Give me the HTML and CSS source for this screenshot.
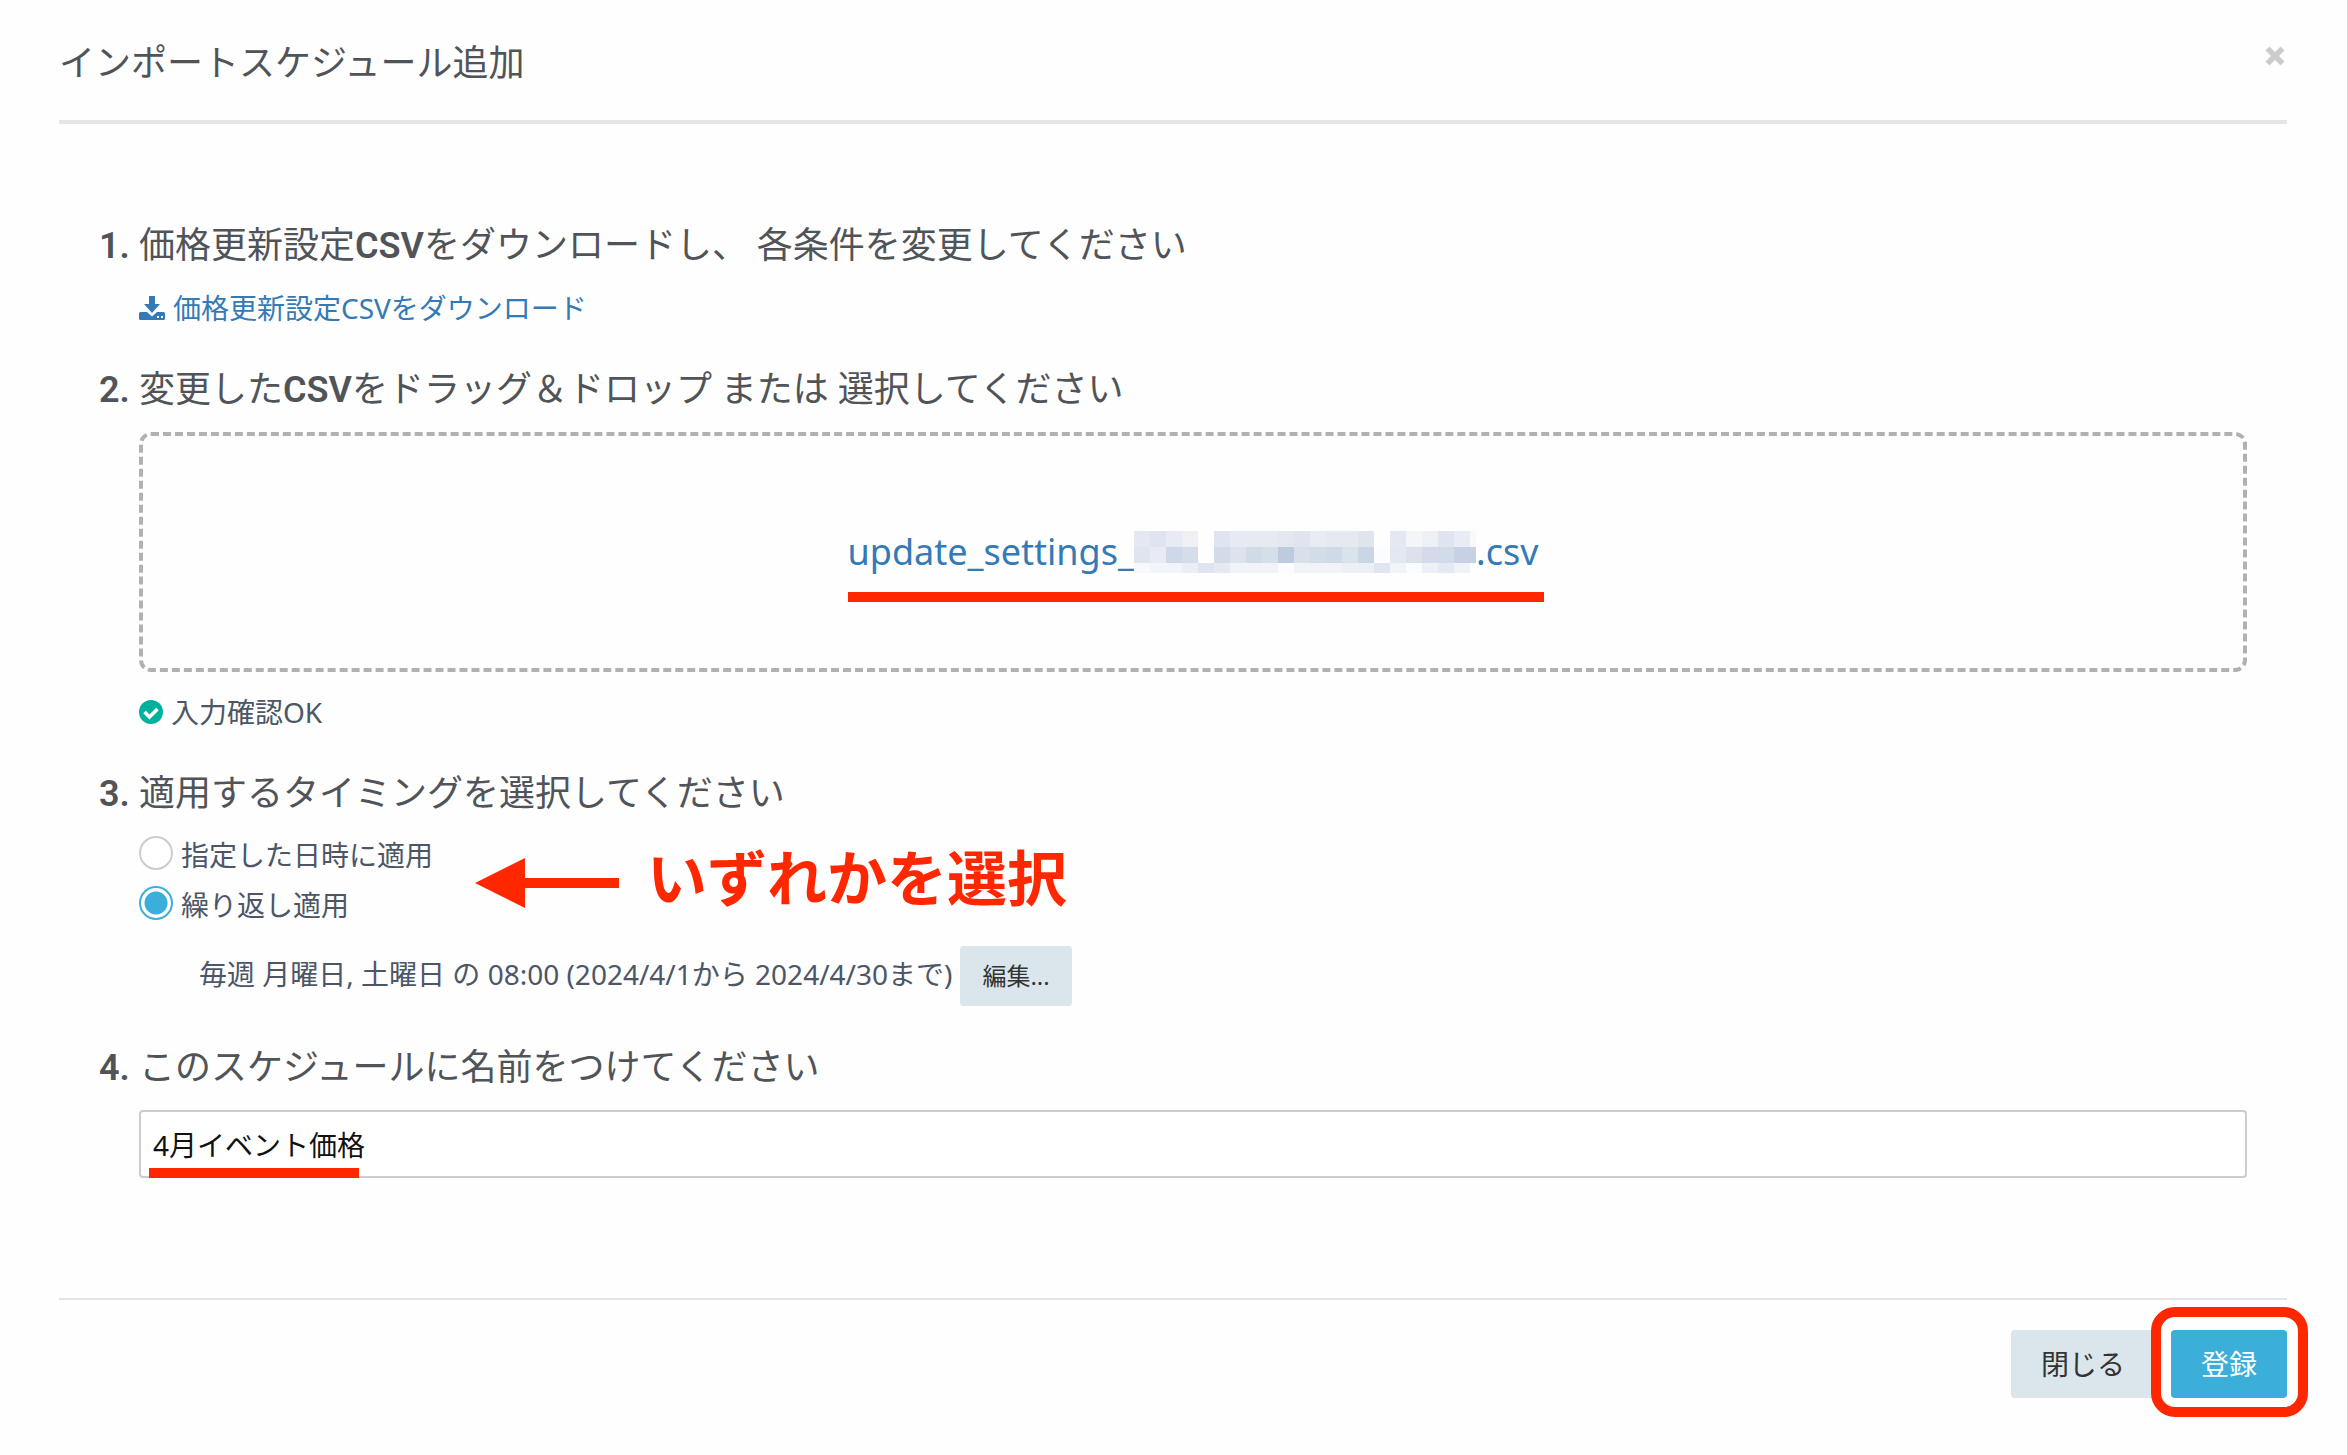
FILE: index.html
```html
<!DOCTYPE html>
<html lang="ja">
<head>
<meta charset="utf-8">
<title>インポートスケジュール追加</title>
<link rel="stylesheet" href="styles.css">
</head>
<body>
<main class="dialog">
  <header class="dialog-header">
    <h1 class="dialog-title">インポートスケジュール追加</h1>
    <button class="dismiss" type="button" aria-label="閉じる">
      <svg width="20" height="20" viewBox="0 0 20 20"><path d="M2.500 2.500L17.500 17.500M17.500 2.500L2.500 17.500" stroke="#ccc" stroke-width="5.600" fill="none"/></svg>
    </button>
  </header>

  <form class="steps">
    <section class="step">
      <h2 class="step-title"><b class="num">1.</b><span>価格更新設定<b>CSV</b>をダウンロードし、 各条件を変更してください</span></h2>
      <div class="step-body">
        <a class="download" href="#">
          <svg class="icon" width="26" height="24" viewBox="0 0 26 24"><path fill="currentColor" d="M10 0h6v8h5L13 17 5 8h5zM1.500 16H8l5 4.500L18 16h6.500Q26 16 26 17.500v5Q26 24 24.500 24h-23Q0 24 0 22.500v-5Q0 16 1.500 16z"/><path fill="#fff" d="M18 20h2v2h-2zM22 20h2v2h-2z"/></svg>
          <span>価格更新設定CSVをダウンロード</span>
        </a>
      </div>
    </section>

    <section class="step">
      <h2 class="step-title"><b class="num">2.</b><span>変更した<b>CSV</b>をドラッグ＆ドロップ または 選択してください</span></h2>
      <div class="step-body">
        <div class="dropzone">
          <a class="file" href="#"><span>update_settings_</span><svg class="mosaic" width="342" height="42" viewBox="0 0 342 42" shape-rendering="crispEdges" role="img" aria-label="非表示">
            <g>
              <path fill="#e4e8f1" d="M0 0h16v16H0z"/><path fill="#dfe4f0" d="M16 0h16v16H16z"/><path fill="#e8ebf3" d="M32 0h16v16H32z"/><path fill="#eef0f5" d="M48 0h16v16H48z"/>
              <path fill="#dee4f0" d="M80 0h16v16H80z"/><path fill="#e6eaf2" d="M96 0h48v16H96z"/><path fill="#e3e8ee" d="M144 0h16v16h-16z"/><path fill="#dfe5ee" d="M160 0h16v16h-16z"/><path fill="#e8ecf5" d="M176 0h16v16h-16z"/><path fill="#e5e9f1" d="M192 0h32v16h-32z"/><path fill="#dfe5ec" d="M224 0h16v16h-16z"/>
              <path fill="#e3e8f2" d="M256 0h16v16h-16z"/><path fill="#f3f5f9" d="M272 0h16v16h-16z"/><path fill="#edf0f5" d="M288 0h16v16h-16z"/><path fill="#dfe4f0" d="M304 0h16v16h-16z"/><path fill="#e8ecf4" d="M320 0h16v16h-16z"/><path fill="#f8f9fb" d="M336 0h6v16h-6z"/>
            </g>
            <g>
              <path fill="#dfe5ef" d="M0 16h16v16H0z"/><path fill="#e8ebf3" d="M16 16h16v16H16z"/><path fill="#ced8e8" d="M32 16h16v16H32z"/><path fill="#d5dcea" d="M48 16h16v16H48z"/>
              <path fill="#d3dae8" d="M80 16h16v16H80z"/><path fill="#dde3ec" d="M96 16h16v16H96z"/><path fill="#d0dbe7" d="M112 16h16v16h-16z"/><path fill="#d6deea" d="M128 16h16v16h-16z"/><path fill="#bccbe0" d="M144 16h16v16h-16z"/><path fill="#d9dfeb" d="M160 16h16v16h-16z"/><path fill="#d4dce9" d="M176 16h16v16h-16z"/><path fill="#cfd9e8" d="M192 16h16v16h-16z"/><path fill="#dae2eb" d="M208 16h16v16h-16z"/><path fill="#c9d6e5" d="M224 16h16v16h-16z"/><path fill="#fafcff" d="M240 16h16v16h-16z"/>
              <path fill="#e3e7f0" d="M256 16h16v16h-16z"/><path fill="#dce1ec" d="M272 16h16v16h-16z"/><path fill="#d3dae9" d="M288 16h32v16h-32z"/><path fill="#c6d2e4" d="M320 16h22v16h-22z"/>
            </g>
            <g>
              <path fill="#f8f9fb" d="M0 32h16v10H0z"/><path fill="#f1f4fa" d="M16 32h32v10H16z"/><path fill="#ebeef4" d="M48 32h16v10H48z"/><path fill="#dfe5f0" d="M64 32h16v10H64z"/><path fill="#e6e9f1" d="M80 32h16v10H80z"/><path fill="#f1f3f7" d="M96 32h48v10H96z"/><path fill="#fafcff" d="M144 32h16v10h-16z"/><path fill="#f1f3f7" d="M160 32h48v10h-48z"/><path fill="#eceff3" d="M208 32h32v10h-32z"/><path fill="#dfe6f1" d="M240 32h16v10h-16z"/><path fill="#f2f4f7" d="M256 32h16v10h-16z"/><path fill="#fafcff" d="M272 32h16v10h-16z"/><path fill="#edf0f6" d="M288 32h16v10h-16z"/><path fill="#e5e9f2" d="M304 32h16v10h-16z"/><path fill="#eff2f9" d="M320 32h16v10h-16z"/>
            </g>
          </svg><span>.csv</span></a>
        </div>
        <p class="status">
          <svg class="icon" width="24" height="24" viewBox="0 0 24 24"><circle cx="12" cy="12" r="12" fill="#00b19d"/><path d="M5.500 12L10.500 17 18.500 9" fill="none" stroke="#fff" stroke-width="3.600"/></svg>
          <span>入力確認OK</span>
        </p>
      </div>
    </section>

    <section class="step">
      <h2 class="step-title"><b class="num">3.</b><span>適用するタイミングを選択してください</span></h2>
      <div class="step-body timing">
        <label class="option"><input class="radio" type="radio" name="timing" value="once"><span>指定した日時に適用</span></label>
        <label class="option"><input class="radio" type="radio" name="timing" value="repeat" checked><span>繰り返し適用</span></label>
        <div class="repeat">
          <span>毎週 月曜日, 土曜日 の 08:00 (2024/4/1から 2024/4/30まで)</span>
          <button class="btn btn-small" type="button">編集...</button>
        </div>
        <div class="callout">
          <svg width="144" height="50" viewBox="0 0 144 50"><path fill="#ff2700" d="M0 25L50 0v20h94v10H50v20z"/></svg>
          <strong>いずれかを選択</strong>
        </div>
      </div>
    </section>

    <section class="step">
      <h2 class="step-title"><b class="num">4.</b><label for="name">このスケジュールに名前をつけてください</label></h2>
      <div class="step-body name-field">
        <input class="text-input" id="name" type="text" value="4月イベント価格">
      </div>
    </section>
  </form>

  <footer class="dialog-footer">
    <button class="btn" type="button">閉じる</button>
    <div class="submit"><button class="btn btn-primary" type="button">登録</button></div>
  </footer>
</main>
</body>
</html>
```
FILE: styles.css
```css
* {
  box-sizing: border-box;
}

body {
  margin: 0;
  background: #fefefe;
  color: #4c5667;
  font: 28px/40px "Noto Sans", "Noto Sans CJK JP", sans-serif;
}

h1,
h2,
p {
  margin: 0;
}

.dialog {
  min-height: 100vh;
  padding: 0 60px 56px 59px;
  border-right: 1px solid #ddd;
}

.dialog-header {
  display: flex;
  justify-content: space-between;
  align-items: flex-start;
  padding: 34px 0 26px;
  border-bottom: 4px solid #e5e5e5;
}

.dialog-title {
  color: #505458;
  font: 400 36px/60px Roboto, "Noto Sans CJK JP", sans-serif;
}

.dismiss {
  display: flex;
  margin: 12px 2px 0 0;
  padding: 0;
  border: 0;
  background: none;
}

.steps {
  display: flex;
  flex-direction: column;
  gap: 36px;
  padding: 96px 40px 120px;
}

.step-title {
  display: flex;
  margin-bottom: 16px;
  color: #505458;
  font: 400 36px/52px Roboto, "Noto Sans CJK JP", sans-serif;
}

.step-title b {
  font-weight: 600;
}

.num {
  flex: 0 0 40px;
}

.step-body {
  margin-left: 40px;
}

a {
  color: #337ab7;
  text-decoration: none;
}

.icon {
  flex: none;
}

.download,
.status {
  display: flex;
  align-items: center;
  gap: 8px;
}

.dropzone {
  display: flex;
  justify-content: center;
  align-items: center;
  height: 240px;
  border: 4px dashed #b1b1b1;
  border-radius: 12px;
}

.file {
  position: relative;
  display: flex;
  align-items: center;
  font-size: 36px;
  line-height: 52px;
}

.file::after {
  content: "";
  position: absolute;
  left: 0;
  right: -6px;
  top: 66px;
  height: 10px;
  background: #ff2700;
}

.status {
  margin-top: 20px;
}

.timing {
  position: relative;
  margin-top: -8px;
}

.option {
  display: flex;
  align-items: center;
  gap: 8px;
  height: 50px;
}

.option span {
  padding-top: 4px;
}

.radio {
  appearance: none;
  width: 34px;
  height: 34px;
  margin: 0;
  border: 2px solid #ccc;
  border-radius: 50%;
  background: #fff;
}

.radio:checked {
  border-color: #3bafda;
  background: radial-gradient(circle, #3bafda 11px, #fff 12px);
}

.repeat {
  display: flex;
  align-items: center;
  gap: 8px;
  margin: 18px 0 0 60px;
}

.repeat span {
  padding-bottom: 4px;
}

.btn {
  height: 68px;
  padding: 0 30px;
  border: 0;
  border-radius: 4px;
  background: #dae6ec;
  color: #333;
  font: inherit;
}

.btn-small {
  height: 60px;
  padding: 0 22px;
  font-size: 24px;
}

.btn-primary {
  background: #3bafda;
  color: #fff;
}

.callout {
  position: absolute;
  left: 336px;
  top: 16px;
  display: flex;
  align-items: center;
  gap: 28px;
  color: #ff2700;
  font-size: 60px;
  line-height: 68px;
}

.callout strong {
  padding-bottom: 10px;
}

.name-field {
  position: relative;
}

.text-input {
  display: block;
  width: 100%;
  height: 68px;
  padding: 0 12px;
  border: 2px solid #ccc;
  border-radius: 4px;
  background: #fff;
  color: #111;
  font: inherit;
}

.name-field::after {
  content: "";
  position: absolute;
  left: 10px;
  bottom: 0;
  width: 210px;
  height: 10px;
  background: #ff2700;
}

.dialog-footer {
  display: flex;
  justify-content: flex-end;
  gap: 16px;
  padding-top: 30px;
  border-top: 2px solid #e5e5e5;
}

.submit {
  position: relative;
}

.submit::after {
  content: "";
  position: absolute;
  inset: -23px -21px -19px -20px;
  border: 10px solid #ff2700;
  border-radius: 24px;
  pointer-events: none;
}
```
